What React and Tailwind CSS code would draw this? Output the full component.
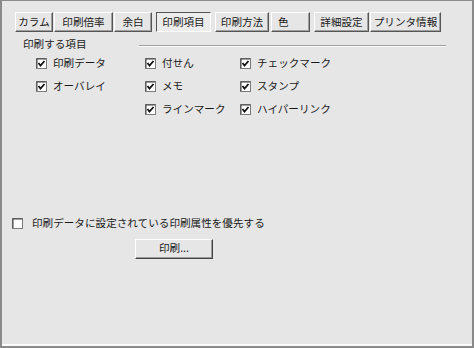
import React from 'react';

const tabs = [
  { label: 'カラム', cls: 'w-[38px] ml-0' },
  { label: '印刷倍率', cls: 'w-[59px] ml-px' },
  { label: '余白', cls: 'w-[38px] ml-[1px]' },
  { label: '印刷項目', cls: 'w-[55px] ml-[4px]', active: true },
  { label: '印刷方法', cls: 'w-[54px] ml-[4px]' },
  { label: '色', cls: 'w-[39px] ml-[2px] justify-start pl-[6px]' },
  { label: '詳細設定', cls: 'w-[55px] ml-[4px]' },
  { label: 'プリンタ情報', cls: 'w-[71px] ml-[1px]' },
];

const Check = ({ checked }) => (
  <svg width="11" height="11" viewBox="0 0 11 11" className="shrink-0">
    <rect x="0.5" y="0.5" width="10" height="10" fill="#ffffff" stroke="#7a7a7a" />
    <path d="M1 1 H10" stroke="#404040" />
    <path d="M1 1 V10" stroke="#404040" />
    {checked && <path d="M2.5 5 L4.5 7.5 L8.5 3" fill="none" stroke="#111" strokeWidth="1.8" />}
  </svg>
);

const Item = ({ label }) => (
  <div className="flex items-center gap-[6px] h-[11px]">
    <Check checked />
    <span>{label}</span>
  </div>
);

const App = () => {
  return (
    <div
      className="w-[474px] h-[348px] bg-[#e6e6e6] border-[2px] border-t-[1px] border-[#8a8a8a] text-[#1a1a1a] text-[10.6px] leading-none overflow-hidden"
      style={{ fontFamily: '"Noto Sans CJK JP", "Noto Sans", sans-serif' }}
    >
      <div className="h-full border-b-[2px] border-[#fafafa] flex flex-col">
        {/* Tabs */}
        <div className="flex pl-[13px] pt-[11px]">
          {tabs.map((t) => (
            <div
              key={t.label}
              className={`h-[20px] flex items-center justify-center border ${t.cls} ${
                t.active
                  ? 'border-t-[#555] border-l-[#555] border-b-[#fff] border-r-[#fff] bg-[#ececec]'
                  : 'border-t-[#fff] border-l-[#fff] border-b-[#555] border-r-[#555] shadow-[inset_-1px_-1px_0_#a0a0a0]'
              }`}
            >
              {t.label}
            </div>
          ))}
        </div>

        {/* Group */}
        <div className="flex items-center pl-[21px] pr-[26px] mt-[7px]">
          <span>印刷する項目</span>
          <div className="flex-1 ml-[52px] mt-[4px] border-t border-[#a0a0a0] border-b border-b-[#fafafa]" />
        </div>

        <div className="flex pl-[34px] mt-[8px]">
          <div className="w-[109px] flex flex-col gap-[12px]">
            <Item label="印刷データ" />
            <Item label="オーバレイ" />
          </div>
          <div className="w-[95px] flex flex-col gap-[12px]">
            <Item label="付せん" />
            <Item label="メモ" />
            <Item label="ラインマーク" />
          </div>
          <div className="flex flex-col gap-[12px]">
            <Item label="チェックマーク" />
            <Item label="スタンプ" />
            <Item label="ハイパーリンク" />
          </div>
        </div>

        {/* Priority option */}
        <div className="flex items-center gap-[9px] pl-[10px] mt-[103px] h-[11px]">
          <Check />
          <span>印刷データに設定されている印刷属性を優先する</span>
        </div>

        <div className="pl-[133px] mt-[10px]">
          <div className="w-[78px] h-[20px] flex items-center justify-center border border-t-[#fff] border-l-[#fff] border-b-[#444] border-r-[#444] shadow-[inset_-1px_-1px_0_#9a9a9a]">
            印刷...
          </div>
        </div>
      </div>
    </div>
  );
};

export default App;
